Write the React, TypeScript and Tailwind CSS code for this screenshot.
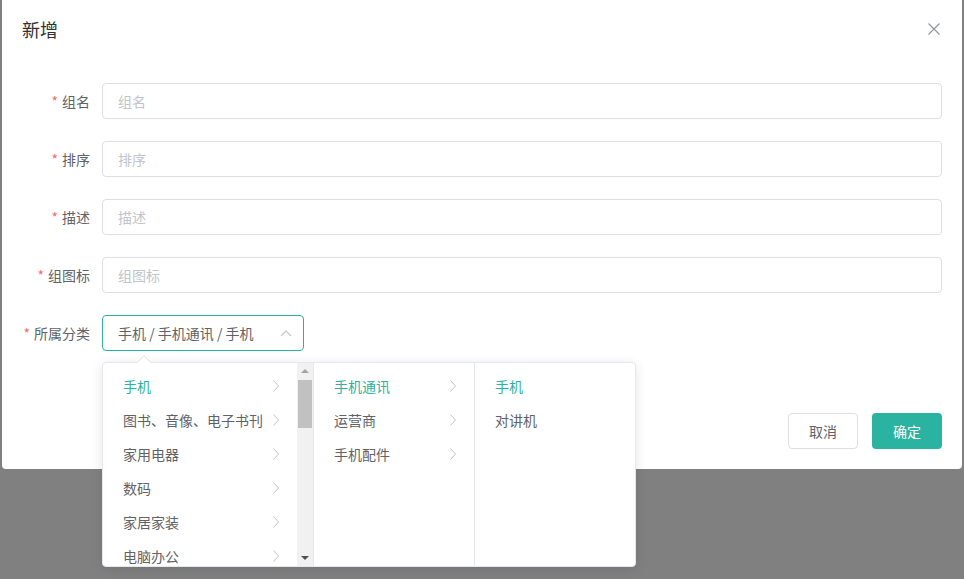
import { useState } from 'react';

const font = { fontFamily: '"Noto Sans CJK SC", "Liberation Sans", sans-serif' };

const fields = [
  { label: '组名', placeholder: '组名' },
  { label: '排序', placeholder: '排序' },
  { label: '描述', placeholder: '描述' },
  { label: '组图标', placeholder: '组图标' },
];

const level1 = ['手机', '图书、音像、电子书刊', '家用电器', '数码', '家居家装', '电脑办公'];
const level2 = ['手机通讯', '运营商', '手机配件'];
const level3 = ['手机', '对讲机'];

function Chevron() {
  return (
    <svg width="8" height="14" viewBox="0 0 8 14" className="shrink-0">
      <polyline points="1.5,1.5 6.5,7 1.5,12.5" fill="none" stroke="#c0c4cc" strokeWidth="1" />
    </svg>
  );
}

function MenuItem({ text, active, arrow }: { text: string; active?: boolean; arrow?: boolean }) {
  return (
    <div className="flex h-[34px] items-center justify-between pl-5 pr-[17px] text-sm">
      <span className={active ? 'text-[#2bb3a2]' : 'text-[#606266]'}>{text}</span>
      {arrow && <Chevron />}
    </div>
  );
}

export default function App() {
  const [value] = useState('手机 / 手机通讯 / 手机');

  return (
    <div className="h-[579px] w-[964px] overflow-hidden bg-[#808080]" style={font}>
      <div className="relative ml-[2px] w-[960px] rounded-b bg-white">
        <div className="flex items-center justify-between px-5 pt-[17px]">
          <span className="text-lg leading-6 text-[#303133]">新增</span>
          <svg width="12" height="12" viewBox="0 0 12 12" className="mr-[2px]">
            <path d="M0.5 0.5 L11.5 11.5 M11.5 0.5 L0.5 11.5" stroke="#909399" strokeWidth="1.1" />
          </svg>
        </div>

        <div className="px-5 pt-[42px]">
          {fields.map((f) => (
            <div key={f.label} className="mb-[22px] flex items-center">
              <label className="w-20 pr-3 text-right text-sm text-[#606266]">
                <span className="mr-1 text-[#f56c6c]">*</span>
                {f.label}
              </label>
              <div className="flex h-9 flex-1 items-center rounded border border-[#dcdfe6] px-[15px] text-sm text-[#c0c4cc]">
                {f.placeholder}
              </div>
            </div>
          ))}

          <div className="flex items-center">
            <label className="w-20 pr-3 text-right text-sm text-[#606266]">
              <span className="mr-1 text-[#f56c6c]">*</span>
              所属分类
            </label>
            <div className="relative">
              <div className="flex h-9 w-[202px] items-center justify-between rounded border border-[#2bb3a2] pl-[15px] pr-[11px] text-sm text-[#606266]">
                <span>{value}</span>
                <svg width="12" height="8" viewBox="0 0 12 8">
                  <polyline points="1,7 6,2 11,7" fill="none" stroke="#c0c4cc" strokeWidth="1.1" />
                </svg>
              </div>

              <div className="absolute left-0 top-[47px] z-10 flex h-[205px] rounded border border-[#e4e7ed] bg-white shadow-[0_2px_12px_0_rgba(0,0,0,0.1)]">
                <div className="absolute -top-[6px] left-[36px] h-[10px] w-[10px] rotate-45 border-l border-t border-[#e4e7ed] bg-white" />
                <div className="relative flex w-[211px] border-r border-[#e4e7ed]">
                  <div className="flex-1 py-[6px]">
                    {level1.map((t, i) => (
                      <MenuItem key={t} text={t} active={i === 0} arrow />
                    ))}
                  </div>
                  <div className="flex w-4 flex-col items-center bg-[#f1f1f1]">
                    <div className="mt-[6px] h-0 w-0 border-x-[4px] border-b-[4px] border-x-transparent border-b-[#a3a3a3]" />
                    <div className="mt-[7px] h-[48px] w-[14px] bg-[#c1c1c1]" />
                    <div className="flex-1" />
                    <div className="mb-[6px] h-0 w-0 border-x-[4px] border-t-[4px] border-x-transparent border-t-[#505050]" />
                  </div>
                </div>
                <div className="w-[161px] border-r border-[#e4e7ed] py-[6px]">
                  {level2.map((t, i) => (
                    <MenuItem key={t} text={t} active={i === 0} arrow />
                  ))}
                </div>
                <div className="w-[160px] py-[6px]">
                  {level3.map((t, i) => (
                    <MenuItem key={t} text={t} active={i === 0} />
                  ))}
                </div>
              </div>
            </div>
          </div>
        </div>

        <div className="flex justify-end gap-[14px] px-5 pb-5 pt-[62px]">
          <button className="h-9 w-[70px] rounded border border-[#dcdfe6] bg-white text-sm text-[#606266]">取消</button>
          <button className="h-9 w-[70px] rounded bg-[#2bb3a2] text-sm text-white">确定</button>
        </div>
      </div>
    </div>
  );
}
